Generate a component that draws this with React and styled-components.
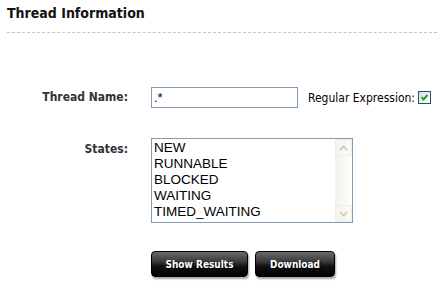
import React from "react";
import styled, { createGlobalStyle } from "styled-components";

const Global = createGlobalStyle`
  html, body { margin: 0; padding: 0; background: #fff; }
  body { font-family: "DejaVu Sans", Verdana, sans-serif; color: #000; }
`;

const Page = styled.div`
  width: 444px;
  height: 296px;
  padding: 0 7px;
  box-sizing: border-box;
  overflow: hidden;
`;

const Header = styled.h2`
  margin: 0;
  padding: 4px 0 10px;
  font-family: "DejaVu Sans Condensed", "DejaVu Sans", sans-serif;
  font-weight: bold;
  font-size: 14px;
  line-height: 18px;
  color: #111;
  border-bottom: 1px dashed #c4c4c4;
`;

const Form = styled.div`
  display: grid;
  grid-template-columns: 121px auto;
  column-gap: 23px;
  row-gap: 30px;
  margin-top: 54px;
  align-items: start;
`;

const Label = styled.div`
  text-align: right;
  font-family: "DejaVu Sans Condensed", "DejaVu Sans", sans-serif;
  font-weight: bold;
  font-size: 12px;
  color: #333;
  line-height: 21px;
  padding-top: ${(p) => p.$top || 0}px;
`;

const Row = styled.div`
  display: flex;
  align-items: center;
`;

const TextInput = styled.input`
  box-sizing: border-box;
  width: 147px;
  height: 21px;
  border: 1px solid #7f9db9;
  padding: 0 2px;
  font-family: "Liberation Sans", Arial, sans-serif;
  font-size: 13px;
  outline: none;
  margin: 0;
`;

const CheckLabel = styled.span`
  font-family: "DejaVu Sans Condensed", "DejaVu Sans", sans-serif;
  font-size: 12px;
  color: #000;
  margin-left: 10px;
`;

const CheckBox = styled.span`
  display: inline-block;
  box-sizing: border-box;
  width: 13px;
  height: 13px;
  border: 1px solid #1c5180;
  background: linear-gradient(135deg, #dcdcd7 0%, #fff 100%);
  margin-left: 3px;
  svg { display: block; }
`;

const ListBox = styled.div`
  box-sizing: border-box;
  width: 202px;
  height: 85px;
  border: 1px solid #7f9db9;
  display: flex;
  background: #fff;
`;

const Items = styled.div`
  flex: 1;
  padding: 1px 0 0 2px;
  font-family: "Liberation Sans", Arial, sans-serif;
  font-size: 13.5px;
  line-height: 16px;
  color: #000;
`;

const Scroll = styled.div`
  width: 17px;
  display: flex;
  flex-direction: column;
  justify-content: space-between;
  background: linear-gradient(90deg, #f3f1ec, #fefefb);
`;

const ScrollBtn = styled.div`
  height: 17px;
  box-sizing: border-box;
  border: 1px solid #eeede5;
  border-radius: 2px;
  background: linear-gradient(90deg, #f4f3ee, #fbfaf6);
  display: flex;
  align-items: center;
  justify-content: center;
`;

const Buttons = styled.div`
  display: flex;
  gap: 7px;
  margin-top: -2px;
`;

const Button = styled.button`
  width: ${(p) => p.$w}px;
  height: 26px;
  border: 1px solid #000;
  border-radius: 4px;
  background: linear-gradient(180deg, #6a6a6a 0%, #3a3a3a 40%, #111 60%, #000 100%);
  color: #fff;
  font-family: "DejaVu Sans Condensed", "DejaVu Sans", sans-serif;
  font-weight: bold;
  font-size: 10px;
  text-shadow: 1px 1px 0 #000;
  box-shadow: 1px 2px 2px rgba(0,0,0,0.35);
  padding: 0;
  cursor: pointer;
`;

const Chevron = ({ up }) => (
  <svg width="9" height="6" viewBox="0 0 9 6">
    <path
      d={up ? "M1 5 L4.5 1.5 L8 5" : "M1 1 L4.5 4.5 L8 1"}
      fill="none"
      stroke="#c8c8c0"
      strokeWidth="1.6"
    />
  </svg>
);

const states = ["NEW", "RUNNABLE", "BLOCKED", "WAITING", "TIMED_WAITING"];

export default function App() {
  return (
    <Page>
      <Global />
      <Header>Thread Information</Header>
      <Form>
        <Label>Thread Name:</Label>
        <Row>
          <TextInput defaultValue=".*" />
          <CheckLabel>Regular Expression:</CheckLabel>
          <CheckBox>
            <svg width="11" height="11" viewBox="0 0 11 11">
              <path d="M2.5 5 L4.5 7.5 L8.5 3" fill="none" stroke="#21a121" strokeWidth="2" />
            </svg>
          </CheckBox>
        </Row>
        <Label $top={1}>States:</Label>
        <ListBox>
          <Items>
            {states.map((s) => (
              <div key={s}>{s}</div>
            ))}
          </Items>
          <Scroll>
            <ScrollBtn><Chevron up /></ScrollBtn>
            <ScrollBtn><Chevron /></ScrollBtn>
          </Scroll>
        </ListBox>
        <div />
        <Buttons>
          <Button $w={97}>Show Results</Button>
          <Button $w={80}>Download</Button>
        </Buttons>
      </Form>
    </Page>
  );
}
